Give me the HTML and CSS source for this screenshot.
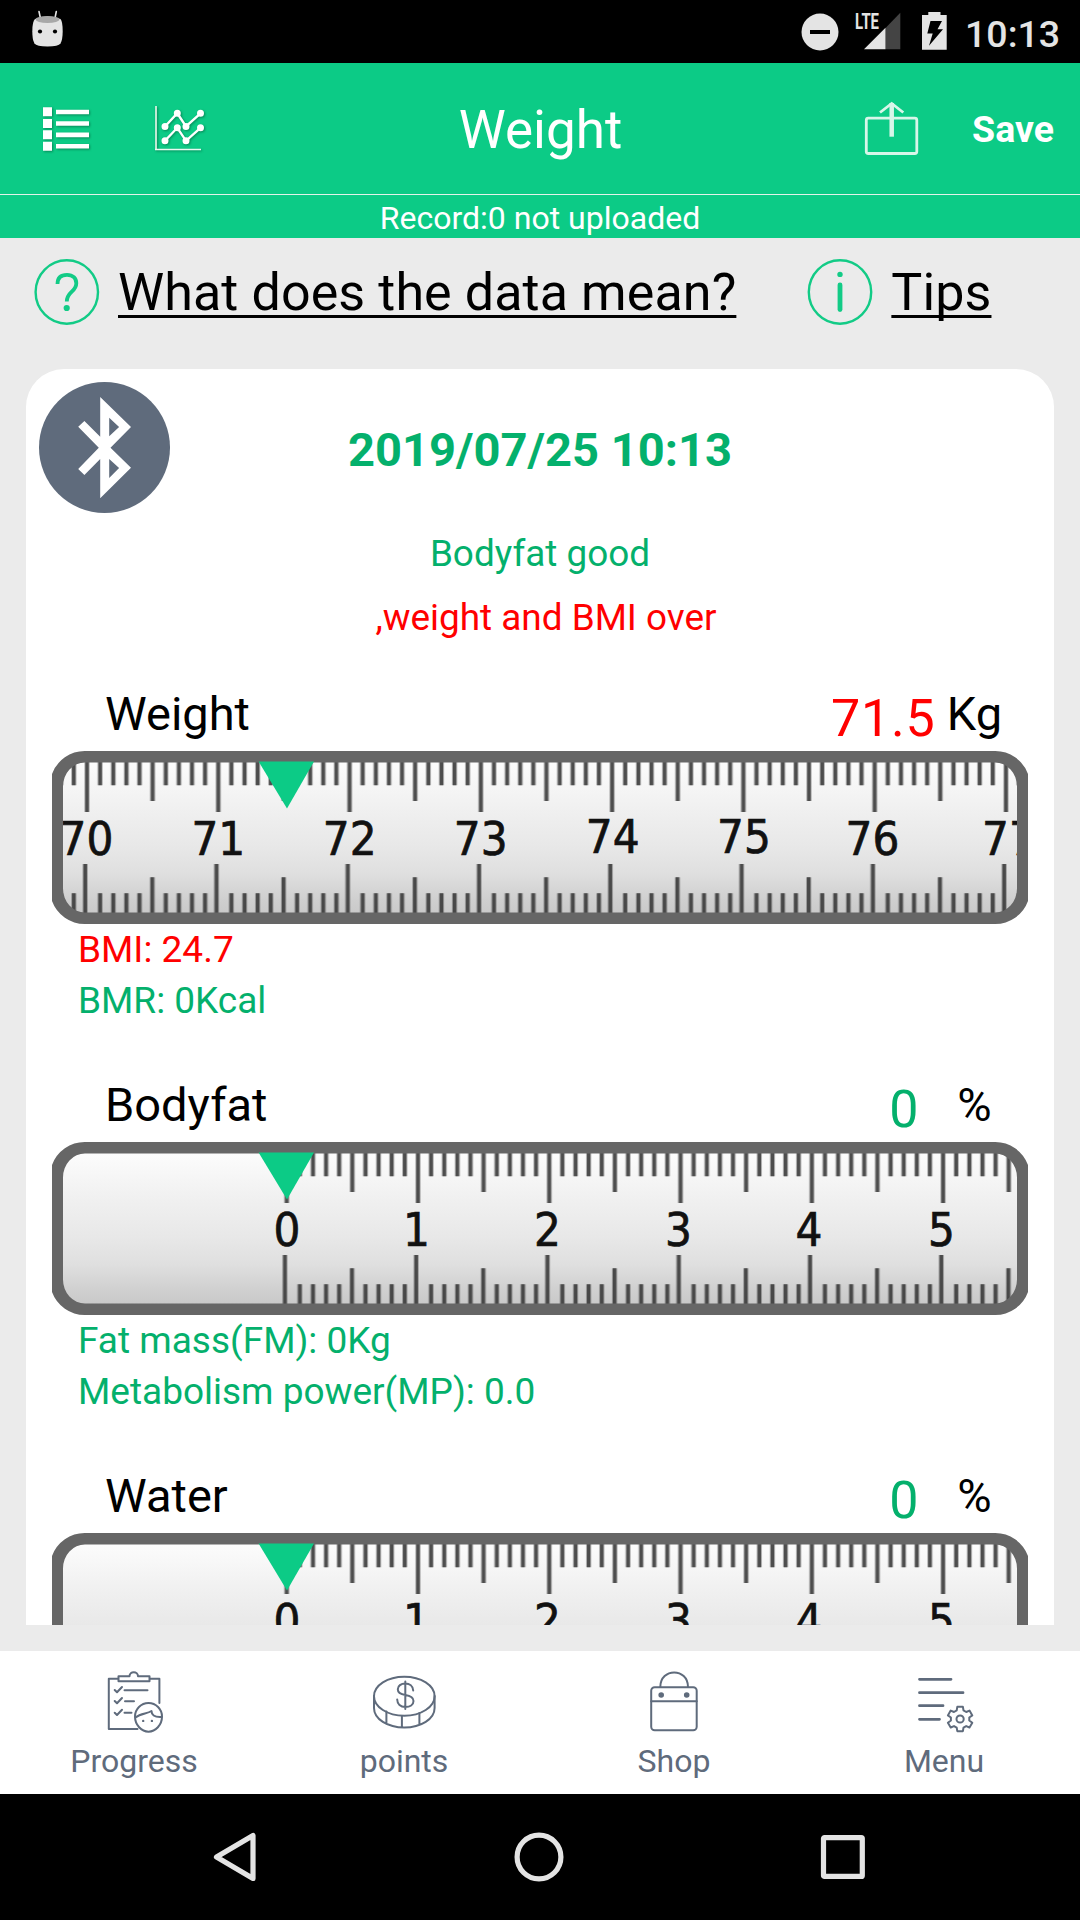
FILE: index.html
```html
<!DOCTYPE html>
<html lang="en">
<head>
<meta charset="utf-8">
<title>Weight</title>
<link rel="stylesheet" href="styles.css">
</head>
<body>
<!-- Shared ruler artwork -->
<svg class="defs" width="0" height="0" aria-hidden="true">
  <defs>
    <linearGradient id="metal" x1="0" y1="0" x2="0" y2="1">
      <stop offset="0" stop-color="#fefefe"/>
      <stop offset=".3" stop-color="#f1f1f1"/>
      <stop offset=".55" stop-color="#e8e8e8"/>
      <stop offset=".72" stop-color="#dfdfdf"/>
      <stop offset=".88" stop-color="#cfcfcf"/>
      <stop offset="1" stop-color="#c6c6c6"/>
    </linearGradient>
    <path id="tick-marks" d="M5 8V61 M18.1 8V34.3 M31.3 8V34.3 M44.4 8V34.3 M57.5 8V34.3 M70.6 8V50 M83.8 8V34.3 M96.9 8V34.3 M110 8V34.3 M123.1 8V34.3 M3.2 113V165 M18.1 142.3V165 M31.3 142.3V165 M44.4 142.3V165 M57.5 142.3V165 M70.3 126.3V165 M83.8 142.3V165 M96.9 142.3V165 M110 142.3V165 M123.1 142.3V165"/>
    <pattern id="ticks" x="-5" y="0" width="131.28" height="173" patternUnits="userSpaceOnUse">
      <use href="#tick-marks" class="tick-halo"/>
      <use href="#tick-marks" class="tick-core"/>
    </pattern>
    <g id="frame">
      <path class="frame" fill-rule="evenodd" d="M33 0H943A35 35 0 0 1 976 23V150A35 35 0 0 1 943 173H33A35 35 0 0 1 0 150V23A35 35 0 0 1 33 0ZM33 11.5A22 24 0 0 0 11 35.5V137.5A22 24 0 0 0 33 161.5H943A22 24 0 0 0 965 137.5V35.5A22 24 0 0 0 943 11.5Z"/>
      <path class="pointer" d="M206.6 10.5H262L235 57.500Z"/>
    </g>
    <g id="percent-ruler">
      <rect x="4" y="4" width="968" height="165" rx="26" fill="url(#metal)"/>
      <g transform="translate(234.7 0)"><rect x="-5" width="735" height="173" fill="url(#ticks)"/></g>
      <g class="digits">
        <text x="235" y="104.2">0</text><text x="364.5" y="104.2">1</text><text x="495.5" y="104.2">2</text>
        <text x="626.5" y="104.2">3</text><text x="757" y="104.2">4</text><text x="889.5" y="104.2">5</text>
      </g>
      <use href="#frame"/>
    </g>
  </defs>
</svg>

<div class="screen">
  <div class="status-bar">
    <svg class="status-android" width="32" height="38" viewBox="31 10 32 38">
      <path d="M39 11.5L40.6 19M56.3 11.5L54.8 19" stroke="#e4e4e4" stroke-width="1.6" stroke-linecap="round"/>
      <path d="M35 19Q47.5 14 60.5 19Q62.7 21.500 62.7 31.500Q62.600 40 60.500 43.500Q58.500 46.500 47.500 46.500Q36.500 46.500 34.500 43.500Q32.300 40 32.300 31.500Q32.300 21.500 35 19Z" fill="#e4e4e4"/>
      <ellipse cx="47.500" cy="19.500" rx="12" ry="3.400" fill="#a8a8a8"/>
      <circle cx="40" cy="31.500" r="2.100"/><circle cx="55" cy="31.500" r="2.100"/>
    </svg>
    <svg class="status-icons" width="150" height="42" viewBox="800 10 150 42">
      <circle cx="820" cy="32" r="18.500" fill="#e4e4e4"/><rect x="810" y="30" width="20" height="4"/>
      <text class="lte" x="855" y="29" textLength="24" lengthAdjust="spacingAndGlyphs">LTE</text>
      <path d="M885.500 28V49.300H900.300V12.700Z" fill="#444"/>
      <path d="M885.500 27.700V49.300H864Z" fill="#e4e4e4"/>
      <path d="M922 15H928.300V12H940.500V15H946.700V49.700H922Z" fill="#e4e4e4"/>
      <path d="M930.500 21H942L937.500 29.300H943L929 45.700L932.700 33.500H927.300Z"/>
    </svg>
    <span class="clock">10:13</span>
  </div>

  <header class="header">
    <div class="header-left">
      <svg class="header-icon" width="48" height="48" viewBox="42 104 48 48" fill="#fff">
        <path d="M43 106.300h9v9h-9zM43 117.900h9v9h-9zM43 129.300h9v9h-9zM43 140.700h9v9h-9zM56 108.700h33v4.600h-33zM56 120.200h33v4.600h-33zM56 131.600h33v4.600h-33zM56 143h33v4.600h-33z"/>
      </svg>
      <svg class="header-icon" width="52" height="48" viewBox="154 104 52 48" fill="none" stroke="#fff">
        <path d="M156 105V148.500" stroke="#bfe9d3" stroke-width="2"/><path d="M155 148.400H201" stroke="#eafaf2" stroke-width="1.500"/>
        <path d="M165 125.500L177.300 112.300L186 125.500L200.500 112.300M165 139.800L177.300 126.800L186 139.800L200.500 126.800" stroke-width="2.400"/>
        <path d="M165 125.500h0M177.300 112.300h0M186 125.500h0M200.500 112.300h0M165 139.800h0M177.300 126.800h0M186 139.800h0M200.500 126.800h0" stroke-width="7" stroke-linecap="round"/>
      </svg>
    </div>
    <h1 class="title">Weight</h1>
    <div class="header-right">
      <svg width="56" height="56" viewBox="864 100 56 56" fill="none" stroke="#d8f6e9">
        <rect x="866.300" y="117.200" width="50.500" height="35.300" rx="2" stroke-width="2.800"/>
        <path d="M891.700 102V135.700" stroke-width="4.500"/><path d="M880 111.500L891.700 102.500L903.300 111.500" stroke-width="2.800"/>
      </svg>
      <span class="save">Save</span>
    </div>
  </header>
  <div class="record">Record:0 not uploaded</div>

  <main class="content">
    <nav class="help">
      <a class="help-link">
        <svg width="66" height="66" viewBox="0 0 66 66" fill="none" stroke="#12cb86">
          <ellipse cx="32.800" cy="33" rx="31.200" ry="31.700" stroke-width="2.400"/>
          <path d="M23.500 25C23.500 18 27.500 15.800 33 15.800C39 15.800 42.300 19.500 42.300 24.200C42.300 33 32.800 32.500 32.800 42.500" stroke-width="3.800"/>
          <circle cx="32.700" cy="49" r="3.100" fill="#12cb86" stroke="none"/>
        </svg>
        <span class="help-text">What does the data mean?</span>
      </a>
      <a class="help-link">
        <svg width="66" height="66" viewBox="0 0 66 66" fill="none" stroke="#12cb86">
          <ellipse cx="33" cy="33" rx="31.200" ry="31.700" stroke-width="2.400"/>
          <path d="M33 26V50.500" stroke-width="4.800" stroke-linecap="round"/>
          <circle cx="33" cy="15.400" r="2.700" fill="#12cb86" stroke="none"/>
        </svg>
        <span class="help-text">Tips</span>
      </a>
    </nav>

    <section class="card">
      <div class="card-top">
        <svg width="131" height="131" viewBox="0 0 131 131">
          <circle cx="65.500" cy="65.500" r="65.500" fill="#5f6b7c"/>
          <path fill="#fff" fill-rule="evenodd" d="M61.200 15L92 45L71.500 65.700L92 85.700L61.200 116.300V77L45.400 93L39.200 87L59.800 65.700L39.200 44.700L45.400 39L61.200 54.700ZM70.200 35.700L80.100 45L70.200 54.300ZM70.200 77L80.100 86L70.200 96Z"/>
        </svg>
        <strong class="date">2019/07/25 10:13</strong>
      </div>
      <div class="summary">
        <p class="good">Bodyfat good</p>
        <p class="summary-warning bad">,weight and BMI over</p>
      </div>

      <article class="metric">
        <div class="metric-head">
          <h2 class="metric-name">Weight</h2>
          <span class="metric-value metric-value-wide bad">71.5</span>
          <span class="metric-unit">Kg</span>
        </div>
        <svg class="ruler" width="976" height="173" viewBox="0 0 976 173">
          <rect x="4" y="4" width="968" height="165" rx="26" fill="url(#metal)"/>
          <g transform="translate(35 0)"><rect x="-24" width="954" height="173" fill="url(#ticks)"/></g>
          <g class="digits">
            <text x="34.500" y="104.200">70</text><text x="166.300" y="104.200">71</text><text x="297.700" y="104.200">72</text><text x="428.700" y="104.200">73</text>
            <text x="560.700" y="102">74</text><text x="692" y="102">75</text><text x="820.500" y="104.200">76</text><text x="957" y="104.200">77</text>
          </g>
          <use href="#frame"/>
        </svg>
        <p class="note bad">BMI: 24.7</p>
        <p class="note good">BMR: 0Kcal</p>
      </article>

      <article class="metric">
        <div class="metric-head">
          <h2 class="metric-name">Bodyfat</h2>
          <span class="metric-value good">0</span>
          <span class="metric-unit">%</span>
        </div>
        <svg class="ruler" width="976" height="173" viewBox="0 0 976 173"><use href="#percent-ruler"/></svg>
        <p class="note good">Fat mass(FM): 0Kg</p>
        <p class="note good">Metabolism power(MP): 0.0</p>
      </article>

      <article class="metric">
        <div class="metric-head">
          <h2 class="metric-name">Water</h2>
          <span class="metric-value good">0</span>
          <span class="metric-unit">%</span>
        </div>
        <svg class="ruler" width="976" height="173" viewBox="0 0 976 173"><use href="#percent-ruler"/></svg>
      </article>
    </section>
  </main>

  <nav class="tabs">
    <a class="tab">
      <svg class="tab-icon" width="72" height="70" viewBox="99 1668 72 70">
        <path d="M118 1678.700H108.800V1729H137.500M150 1678.700H159.400V1703"/>
        <path d="M118.500 1676.200H129.500C129.500 1670.800 138 1670.800 138 1676.200H149.500V1681.300H118.500Z"/>
        <path d="M114.700 1690L117 1692.300L122 1687M124.500 1690.300H147.500M114.700 1701L117 1703.300L122 1698M125 1701.300H134M114.700 1712.700L117 1715L122 1709.700M124.500 1712.700H131.500"/>
        <path d="M135 1716.500A13.500 13.500 0 1 1 162 1716.500C162 1725 155.500 1731.700 148.500 1731.700C141.500 1731.700 135 1725 135 1716.500Z"/>
        <path d="M135.500 1717.500C141 1713 147 1714 151.500 1711C151.500 1714.500 154 1717.500 161.500 1717"/>
        <path d="M143.200 1720.900h0M151.900 1720.900h0" stroke-width="2.400"/>
      </svg>
      <span class="tab-label">Progress</span>
    </a>
    <a class="tab">
      <svg class="tab-icon" width="72" height="70" viewBox="369 1668 72 70">
        <ellipse cx="404.300" cy="1696.200" rx="30.300" ry="19.500"/>
        <path d="M374 1696V1708C374 1719 387.500 1727.500 404.300 1727.500C421 1727.500 434.600 1719 434.600 1708V1696M386.400 1711.500V1723M401.900 1716V1727M419.400 1713V1724.500"/>
        <path d="M413.200 1690.500C413 1686 409.500 1683.500 405.300 1683.500C401 1683.500 397.800 1686 397.800 1689.300C397.800 1693.500 401.500 1694.500 405.300 1695C409.500 1695.600 413.500 1697.300 413.500 1701C413.500 1704.800 410 1707 405.300 1707C400.500 1707 397.300 1704 397.200 1699.500M405.300 1681.500V1709"/>
      </svg>
      <span class="tab-label">points</span>
    </a>
    <a class="tab">
      <svg class="tab-icon" width="72" height="70" viewBox="639 1668 72 70">
        <rect x="651.200" y="1687.300" width="45.500" height="43" rx="3.500"/>
        <path d="M651.200 1701.300H696.700M660.300 1687C660.300 1667.500 688 1667.500 688 1687"/>
        <path d="M661.200 1695h0M686.700 1695h0" stroke-width="5.600"/>
      </svg>
      <span class="tab-label">Shop</span>
    </a>
    <a class="tab">
      <svg class="tab-icon" width="72" height="70" viewBox="909 1668 72 70">
        <path d="M919.500 1679.300H951M919.500 1692.700H963M919.500 1705.700H943M919.500 1719.300H939.500" stroke-width="2.800"/>
        <path d="M957.300 1706.800H962.900L963.500 1710.400L966.200 1712L969.500 1710.600L972.300 1715.400L969.300 1717.500V1720.500L972.300 1722.800L969.500 1727.500L966.200 1726.100L963.500 1727.700L962.900 1731.200H957.300L956.700 1727.700L954 1726.100L950.700 1727.500L947.900 1722.800L950.900 1720.500V1717.500L947.900 1715.400L950.700 1710.600L954 1712L956.700 1710.400Z"/>
        <circle cx="960.100" cy="1719" r="3.600"/>
      </svg>
      <span class="tab-label">Menu</span>
    </a>
  </nav>

  <div class="system-nav">
    <svg width="50" height="56" viewBox="0 0 50 56"><path d="M43 6.500V49.500L6.500 28Z"/></svg>
    <svg width="50" height="56" viewBox="0 0 50 56"><circle cx="25" cy="28" r="21.900"/></svg>
    <svg width="50" height="56" viewBox="0 0 50 56"><rect x="5.500" y="8.600" width="38.800" height="38.800" rx="1"/></svg>
  </div>
</div>
</body>
</html>
```
FILE: styles.css
```css
* { box-sizing: border-box; margin: 0; padding: 0; }
body { font-family: Roboto, sans-serif; color: #000; background: #000; }
svg { display: block; flex: none; }
.defs { position: absolute; }
.screen { width: 1080px; height: 1920px; display: flex; flex-direction: column; overflow: hidden; }

.status-bar { height: 63px; background: #000; display: flex; align-items: flex-start; padding: 10px 22px 0 31px; }
.status-icons { margin-left: auto; }
.clock { width: 93px; margin-left: 15px; padding-top: 3px; color: #e4e4e4; font-size: 37.5px; font-weight: 500; line-height: 43px; white-space: nowrap; }
.lte { font: 700 22px Roboto, sans-serif; fill: #e4e4e4; }

.header { height: 132px; background: #0ccb86; border-bottom: 1px solid #e4f3ea; color: #fff; display: grid; grid-template-columns: 1fr auto 1fr; align-items: center; padding: 0 26px 0 42px; }
.header-left { display: flex; gap: 64px; }
.header-icon { filter: drop-shadow(1px 1px 1px rgba(0, 70, 40, .5)); }
.title { font-size: 53px; font-weight: 400; line-height: 64px; padding-top: 2px; margin-left: -15px; white-space: nowrap; }
.header-right { display: flex; justify-content: flex-end; align-items: center; gap: 52px; }
.save { font-size: 37.5px; font-weight: 700; line-height: 44px; padding-top: 1px; }
.record { height: 43px; background: #0ccb86; color: #fff; text-align: center; font-size: 32px; line-height: 43px; padding-top: 2px; }

.content { height: 1413px; background: #ebebeb; padding: 0 26px 26px; display: flex; flex-direction: column; }
.help { height: 131px; flex: none; padding: 21px 0 0 8px; display: flex; gap: 71px; }
.help-link { display: flex; height: 66px; gap: 18px; align-items: center; }
.help-text { font-size: 52px; line-height: 66px; padding-top: 2px; letter-spacing: .1px; text-decoration: underline; text-decoration-thickness: 3px; text-underline-offset: 5px; text-decoration-skip-ink: none; white-space: nowrap; }

.card { flex: 1; min-height: 0; background: #fff; border-radius: 38px 38px 0 0; overflow: hidden; }
.card-top { height: 153px; padding: 13px 13px 0; display: grid; grid-template-columns: 131px 1fr 131px; }
.date { color: #04b06c; font-size: 47.1px; line-height: 136px; text-align: center; white-space: nowrap; }
.summary { height: 158px; text-align: center; font-size: 36.9px; line-height: 64px; }
.summary-warning { padding-left: 12px; }
.good { color: #04b06c; }
.bad { color: #f00; }

.metric { height: 391px; padding: 0 26px; }
.metric-head { height: 71px; padding: 0 0 3px 53px; display: flex; align-items: center; font-size: 47px; line-height: 60px; }
.metric-name { font-size: 47px; font-weight: 400; }
.metric-value { margin: 10px 21px 0 auto; font-size: 52px; }
.metric-value-wide { margin-right: 4px; letter-spacing: .8px; }
.metric-unit { width: 70px; margin-right: 18.5px; text-align: center; }
.note { padding-left: 26px; font-size: 37px; line-height: 51px; }

.ruler { overflow: hidden; }
.frame { fill: #666; }
.pointer { fill: #0ccb86; }
.tick-halo { stroke: #333; stroke-opacity: .35; stroke-width: 5.4; }
.tick-core { stroke: #333; stroke-opacity: .8; stroke-width: 3.4; }
.digits { font: 47px "DejaVu Sans Condensed", "DejaVu Sans", sans-serif; font-stretch: condensed; fill: #111; stroke: #111; stroke-width: .7; text-anchor: middle; }

.tabs { height: 143px; background: #fff; color: #5f6b7c; display: grid; grid-template-columns: repeat(4, 1fr); padding-top: 17px; }
.tab { display: flex; flex-direction: column; align-items: center; gap: 4px; }
.tab-icon { fill: none; stroke: #5f6b7c; stroke-width: 2; stroke-linecap: round; stroke-linejoin: round; }
.tab-label { font-size: 32px; line-height: 38px; margin-left: -2px; }

.system-nav { height: 126px; background: #000; display: flex; justify-content: space-between; align-items: center; padding: 0 212px 0 210px; }
.system-nav svg { fill: none; stroke: #e4e4e4; stroke-width: 5.2; stroke-linejoin: round; }
```
